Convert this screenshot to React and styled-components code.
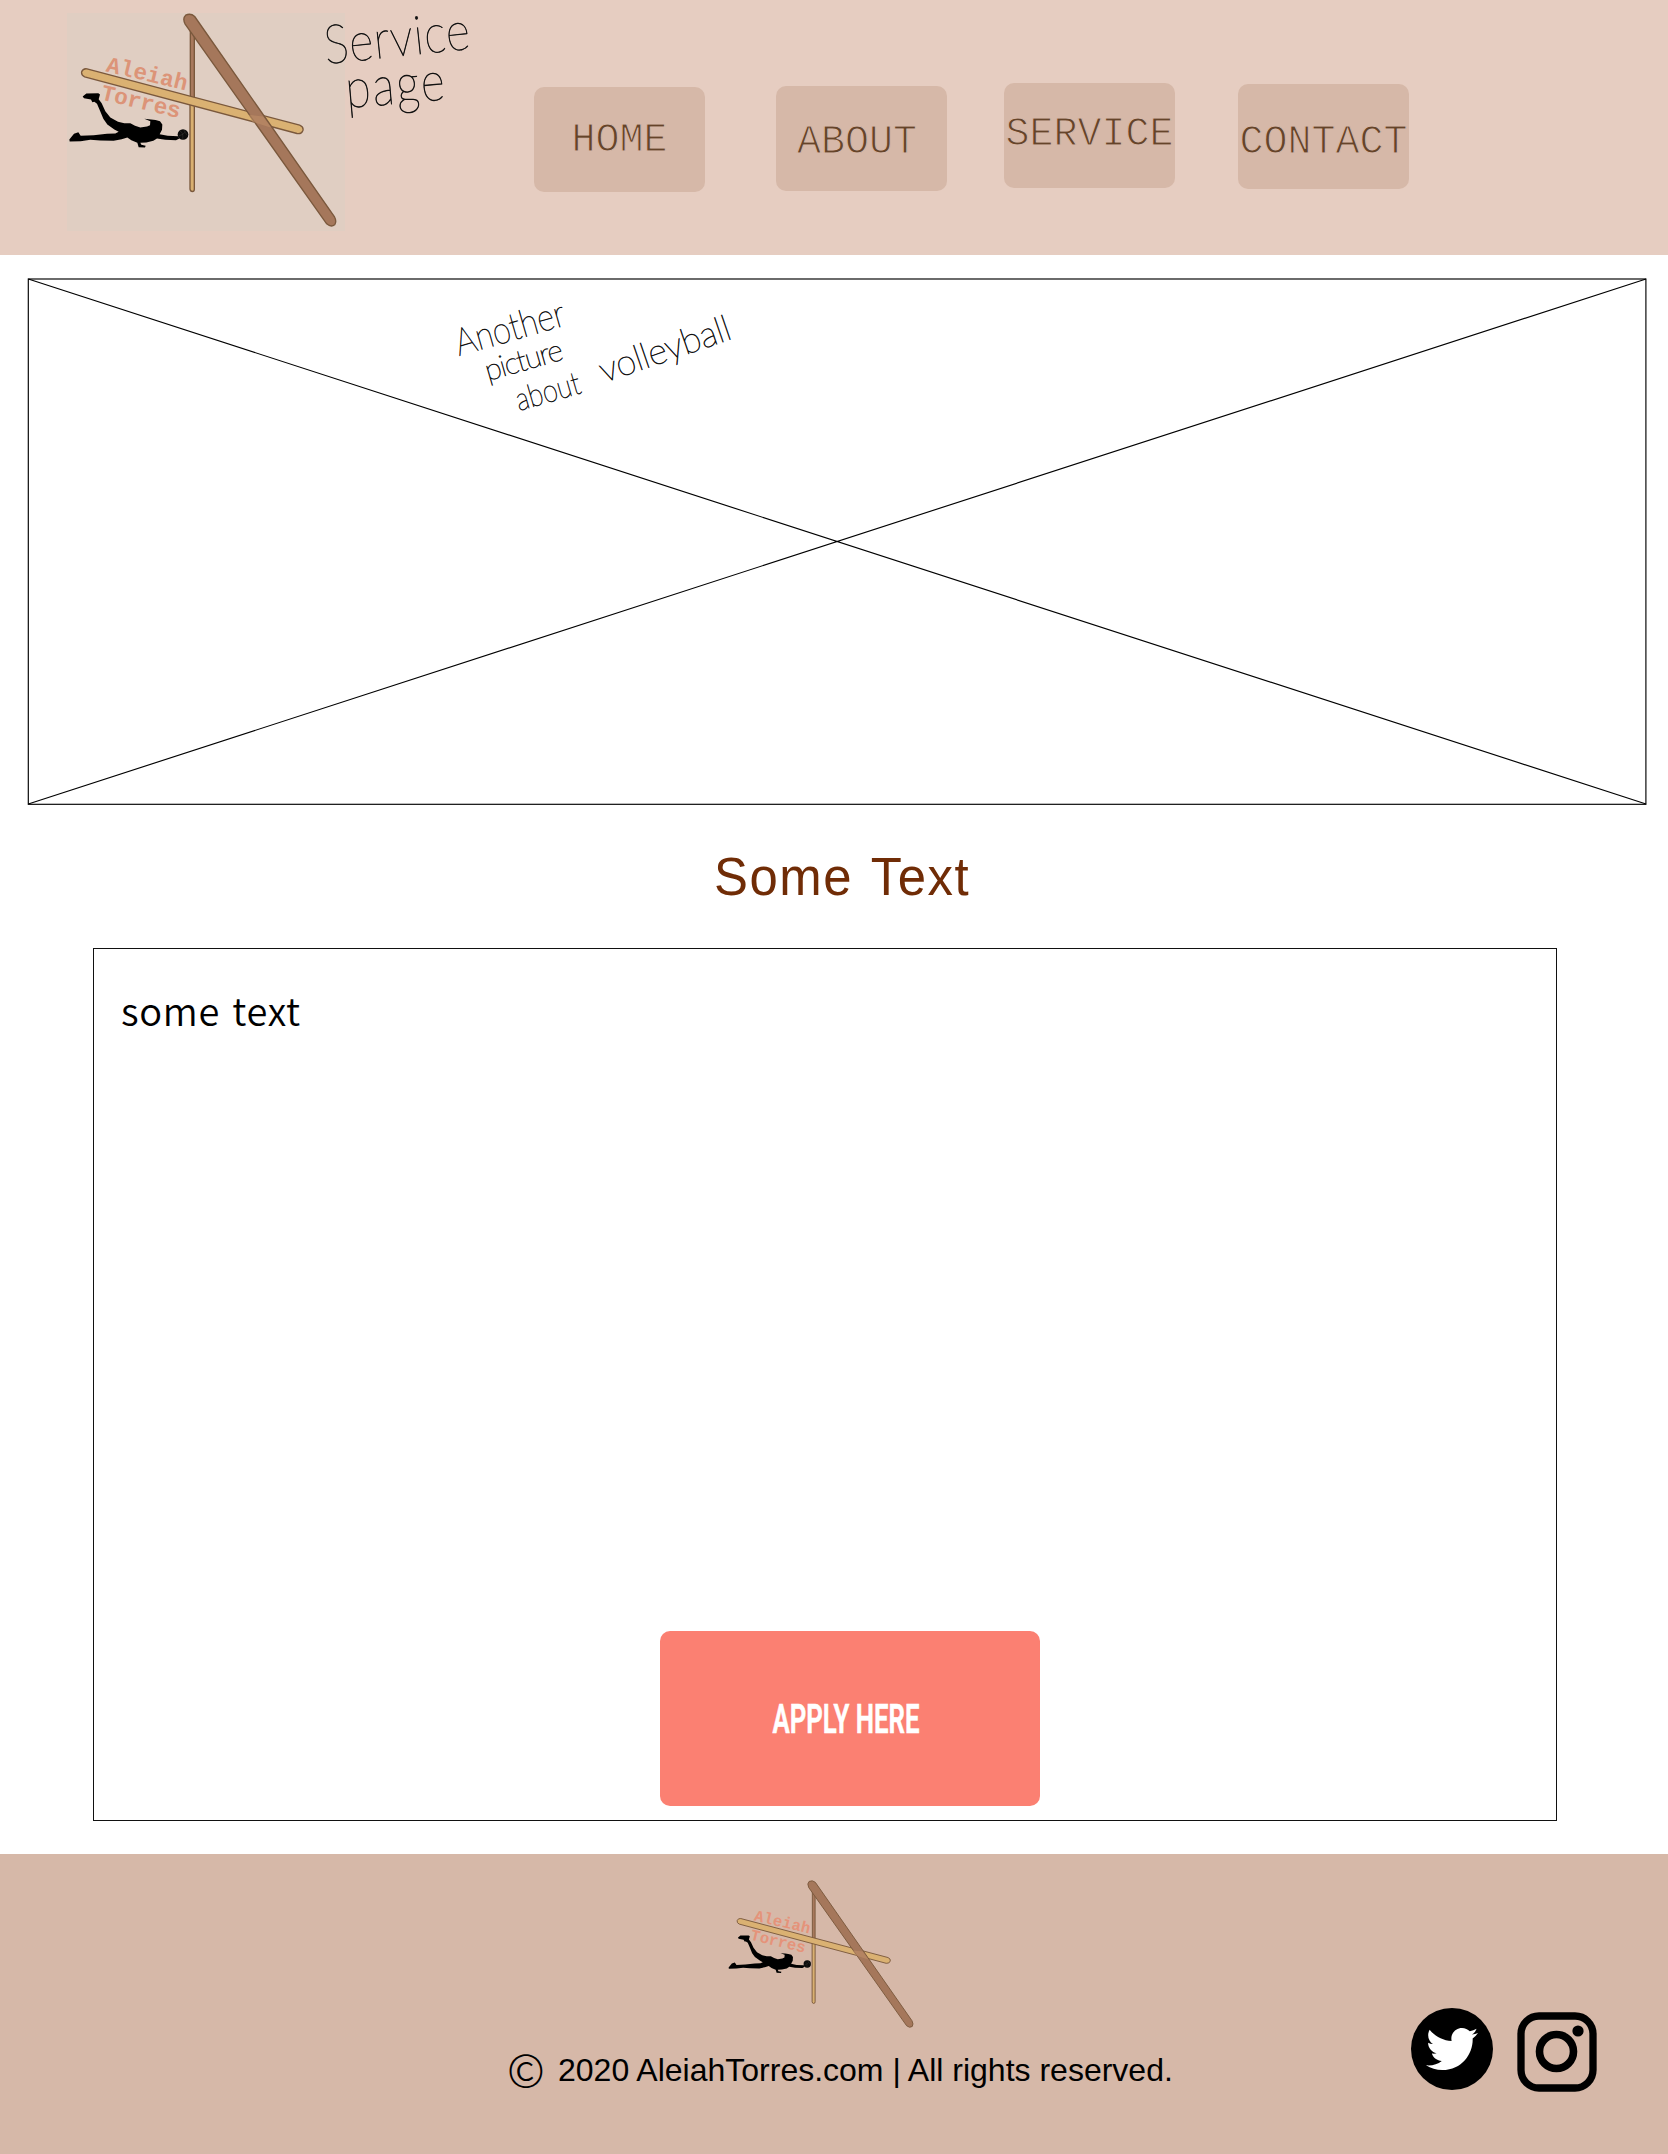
import React from "react";
import styled, { createGlobalStyle } from "styled-components";
import { FaTwitter } from "react-icons/fa";

const GlobalStyle = createGlobalStyle`
  * { box-sizing: border-box; }
  body { margin: 0; background: #fff; font-family: "Liberation Sans", Arial, sans-serif; color: #000; }
`;

const Page = styled.div`
  position: relative;
  width: 1668px;
  height: 2154px;
  display: flex;
  flex-direction: column;
  overflow: hidden;
`;

const Header = styled.header`
  height: 255px;
  flex: none;
  display: flex;
  align-items: flex-start;
  padding: 13px 0 0 67px;
  background: #e6cdc1;
`;

const LogoPanel = styled.div`
  width: 278px;
  height: 218px;
  flex: none;
  background: #e0cec2;
`;

const LogoArt = styled.svg`
  display: block;
  width: ${(p) => p.$width}px;
  height: ${(p) => p.$height}px;
  overflow: visible;
`;

const Nav = styled.nav`
  display: flex;
  padding-left: 189px;
`;

const NavButton = styled.a`
  width: 171px;
  height: 105px;
  margin-top: ${(p) => p.$top}px;
  margin-right: ${(p) => p.$gap}px;
  padding-top: ${(p) => p.$pad}px;
  padding-right: ${(p) => p.$shift || 0}px;
  display: flex;
  justify-content: center;
  border-radius: 10px;
  background: #d6b8a8;
  color: #65442a;
  font: 40px/46px "Courier New", "Liberation Mono", monospace;
  -webkit-text-stroke: 1.1px #d6b8a8;
`;

const Main = styled.main`
  height: 1599px;
  flex: none;
  display: flex;
  flex-direction: column;
`;

const Hero = styled.section`
  width: 1620px;
  height: 527px;
  margin: 23px 0 0 27px;
`;

const HeroCross = styled.svg`
  display: block;
  width: 100%;
  height: 100%;
`;

const Title = styled.h1`
  margin: 39px 0 0 714px;
  height: 104px;
  color: #702c06;
  font: 400 53px/66px "Liberation Sans", Arial, sans-serif;
  letter-spacing: 1.6px;
  word-spacing: 3px;
  white-space: nowrap;
  transform: scaleX(0.96);
  transform-origin: left;
`;

const Content = styled.section`
  width: 1464px;
  height: 873px;
  margin-left: 93px;
  border: 1px solid #111;
  display: flex;
  flex-direction: column;
  justify-content: space-between;
  padding: 31px 0 14px 27px;
`;

const Body = styled.p`
  margin: 0;
  font: 350 38px/60px "Noto Sans CJK SC", "Noto Sans", sans-serif;
  letter-spacing: 0.7px;
  word-spacing: 3px;
`;

const Apply = styled.button`
  width: 380px;
  height: 175px;
  margin: 0 0 0 539px;
  padding: 3px 8px 0 0;
  border: 0;
  border-radius: 10px;
  background: #fb8072;
  color: #fff;
  font: 600 40px/48px Roboto, sans-serif;
`;

const Condensed = styled.span`
  display: inline-block;
  transform: scaleX(0.645);
  white-space: nowrap;
  -webkit-text-stroke: 0.6px #fff;
`;

const Footer = styled.footer`
  height: 300px;
  flex: none;
  display: flex;
  flex-direction: column;
  background: #d6b8a8;
`;

const FooterLogo = styled.div`
  margin: 26px 0 0 727px;
  height: 128px;
`;

const FooterRow = styled.div`
  display: flex;
  padding-left: 507px;
`;

const Mark = styled.span`
  width: 51px;
  margin-top: 29px;
  font: 300 46px/60px "Noto Sans CJK SC", sans-serif;
`;

const Legal = styled.span`
  width: 853px;
  margin-top: 43px;
  font-size: 32px;
  line-height: 38px;
  white-space: nowrap;
`;

const Social = styled.div`
  display: flex;
  gap: 24px;
`;

const TwitterBadge = styled.a`
  width: 82px;
  height: 82px;
  display: flex;
  align-items: center;
  justify-content: center;
  border-radius: 50%;
  background: #000;
  color: #fff;
`;

const InstagramIcon = styled.svg`
  width: 80px;
  height: 80px;
  margin-top: 4px;
`;

const Notes = styled.svg`
  position: absolute;
  left: 0;
  top: 0;
  width: 800px;
  height: 440px;
  pointer-events: none;
  fill: #111;
  stroke: #111;
  stroke-width: 0.7px;
  font-family: Lato, "DejaVu Sans", sans-serif;
  font-weight: 200;
`;

function Logo({ width, height, textColor }) {
  return (
    <LogoArt viewBox="50 40 825 650" $width={width} $height={height}>
      <g stroke="#7a583c" strokeWidth="4">
        <path d="M420 85V310h12V85z" fill="#a8795d" />
        <path d="M419 300V568Q420 575 426 575Q432 575 432 568V300z" fill="#d9b071" />
        <path d="M110 207L748 376Q760 381 758 391Q754 403 740 401L103 231Q92 226 94 216Q98 205 110 207z" fill="#dab172" />
        <path d="M433 50L852 650Q860 665 853 675Q842 683 829 672L404 72Q396 55 406 46Q421 39 433 50z" fill="#a5775b" />
      </g>
      <path d="M638 350L663 384L606 366L596 345z" fill="#c19067" opacity=".55" />
      <g fill={textColor} fontFamily='"Courier New", "Liberation Mono", monospace' fontWeight="700" fontSize="68">
        <text transform="translate(165 214) rotate(13.5)" textLength="248">Aleiah</text>
        <text transform="translate(149 298) rotate(13.5)" textLength="243">Torres</text>
      </g>
      <path d="M97 290L108 281L144 280L149 284L145 298L154 310L165 334L180 353L203 366L222 370L240 370L254 378L270 383L290 380L299 376L300 364L282 357L302 359Q316 360 329 364L336 374L335 390L328 403L352 408L383 409L387 416L377 421L345 420L320 416L309 423L288 428L270 429L273 435L286 438L284 443L265 442L261 429L243 421L231 413L214 418L190 423L150 422L120 420L91 424L58 425L57 419L71 402L84 397L91 408L130 406L170 402L195 401L205 396L192 389L171 374L159 357L149 333L140 312L132 306L126 307L122 299L101 295z" fill="#000" />
      <circle cx="398" cy="404" r="16" fill="#0b0b0b" />
      <path d="M389 394Q400 398 397 417M400 390L410 406M386 408Q399 405 405 396" stroke="#474440" strokeWidth="1.2" fill="none" />
    </LogoArt>
  );
}

export default function App() {
  return (
    <>
      <GlobalStyle />
      <Page>
        <Header>
          <LogoPanel>
            <Logo width={275} height={217} textColor="#dc9478" />
          </LogoPanel>
          <Nav>
            <NavButton $top={74} $gap={71} $pad={31}>HOME</NavButton>
            <NavButton $top={73} $gap={57} $pad={34} $shift={9}>ABOUT</NavButton>
            <NavButton $top={70} $gap={63} $pad={29}>SERVICE</NavButton>
            <NavButton $top={71} $gap={0} $pad={36}>CONTACT</NavButton>
          </Nav>
        </Header>
        <Main>
          <Hero>
            <HeroCross viewBox="0 0 1620 527" fill="none" stroke="#000" strokeWidth="1.15">
              <rect x="1.3" y="1" width="1617.6" height="525.3" />
              <path d="M1.3 1L1619 526M1619 1L1.3 526" />
            </HeroCross>
          </Hero>
          <Title>Some Text</Title>
          <Content>
            <Body>some text</Body>
            <Apply><Condensed>APPLY HERE</Condensed></Apply>
          </Content>
        </Main>
        <Footer>
          <FooterLogo>
            <Logo width={190.3} height={150} textColor="#e5937a" />
          </FooterLogo>
          <FooterRow>
            <Mark>©</Mark>
            <Legal>2020 AleiahTorres.com | All rights reserved.</Legal>
            <Social>
              <TwitterBadge><FaTwitter size={52} /></TwitterBadge>
              <InstagramIcon viewBox="0 0 80 80" fill="none" stroke="#000">
                <rect x="4" y="4" width="72" height="72" rx="18" strokeWidth="7.3" />
                <circle cx="39.5" cy="39.5" r="17" strokeWidth="7.6" />
                <circle cx="61" cy="19" r="5.6" fill="#000" stroke="none" />
              </InstagramIcon>
            </Social>
          </FooterRow>
        </Footer>
        <Notes>
          <text transform="translate(326 64) rotate(-6) scale(.86 1)" fontSize="54" textLength="170">Service</text>
          <text transform="translate(347 108) rotate(-5) scale(.92 1.1)" fontSize="50" textLength="108">page</text>
          <text transform="translate(459 356) rotate(-16)" fontSize="38" textLength="113" lengthAdjust="spacingAndGlyphs">Another</text>
          <text transform="translate(488 381) rotate(-16)" fontSize="30" textLength="80">picture</text>
          <text transform="translate(519 411) rotate(-16)" fontSize="32" textLength="66" lengthAdjust="spacingAndGlyphs">about</text>
          <text transform="translate(604 383) rotate(-19)" fontSize="36" textLength="137">volleyball</text>
        </Notes>
      </Page>
    </>
  );
}
